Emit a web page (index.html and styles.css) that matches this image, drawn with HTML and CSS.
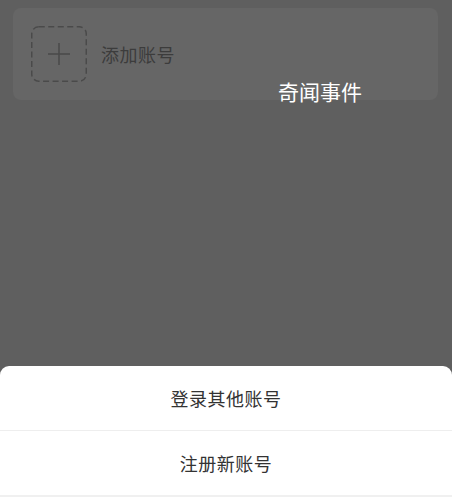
FILE: index.html
```html
<!DOCTYPE html>
<html lang="zh">
<head>
<meta charset="utf-8">
<link rel="stylesheet" href="styles.css">
</head>
<body>
<div class="page">
  <div class="card">
    <div class="add-box">
      <svg class="add-frame" width="56" height="56" viewBox="0 0 56 56"><rect x="0.75" y="0.75" width="54.5" height="54.5" rx="7" ry="7" fill="none" stroke="#4a4a4a" stroke-width="1.5" stroke-dasharray="6 3.5"/></svg>
      <svg class="add-plus" width="24" height="24" viewBox="0 0 24 24"><path d="M12 1V23M1 12H23" stroke="#4a4a4a" stroke-width="1.5" fill="none"/></svg>
    </div>
    <span class="add-label">添加账号</span>
  </div>
  <div class="toast">奇闻事件</div>
  <div class="spacer"></div>
  <div class="sheet">
    <div class="row">登录其他账号</div>
    <div class="row row-last">注册新账号</div>
  </div>
</div>
</body>
</html>
```
FILE: styles.css
```css
html, body {
  margin: 0;
  padding: 0;
  height: 100%;
}
body {
  background: #5f5f5f;
  font-family: "Noto Sans CJK SC", "Noto Sans", sans-serif;
}
.page {
  position: relative;
  height: 497px;
  display: flex;
  flex-direction: column;
  padding-top: 8px;
  box-sizing: border-box;
}
.card {
  margin: 0 14px 0 13px;
  height: 92px;
  background: #666666;
  border-radius: 8px;
  display: flex;
  align-items: center;
  padding-left: 18px;
  box-sizing: border-box;
}
.add-box {
  position: relative;
  width: 56px;
  height: 56px;
  display: flex;
  align-items: center;
  justify-content: center;
}
.add-frame {
  position: absolute;
  left: 0;
  top: 0;
}
.add-label {
  margin-left: 14px;
  font-size: 18px;
  color: #3c3c3c;
  letter-spacing: 0.5px;
}
.toast {
  position: absolute;
  left: 278px;
  top: 76px;
  font-size: 21px;
  line-height: 30px;
  color: #ffffff;
}
.spacer {
  flex: 1;
}
.sheet {
  background: #ffffff;
  border-radius: 9px 9px 0 0;
  border-bottom: 2px solid #f0f0f0;
}
.row {
  height: 64px;
  display: flex;
  align-items: center;
  justify-content: center;
  font-size: 18px;
  color: #333333;
  letter-spacing: 0.5px;
  border-bottom: 1px solid #eeeeee;
}
.row-last {
  border-bottom: none;
}
```
